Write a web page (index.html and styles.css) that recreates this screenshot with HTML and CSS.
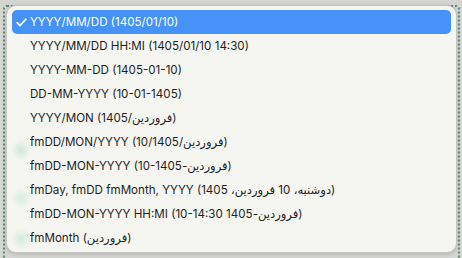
FILE: index.html
```html
<!DOCTYPE html>
<html lang="fa">

<head>
    <meta charset="UTF-8">
    <title>Date format</title>
    <link rel="stylesheet" href="styles.css">
</head>

<body>
    <div class="field">
        <!-- the open popup of the date format select -->
        <ul class="menu" dir="ltr">
            <li class="item selected">
                <svg class="check" width="11" height="9" viewBox="0 0 11 9">
                    <polyline points="1.2,4.6 4,7.6 9.8,1.2" fill="none" stroke="#fff" stroke-width="1.7"
                        stroke-linecap="round" stroke-linejoin="round" />
                </svg>YYYY/MM/DD (1405/01/10)
            </li>
            <li class="item">YYYY/MM/DD HH:MI (1405/01/10 14:30)</li>
            <li class="item">YYYY-MM-DD (1405-01-10)</li>
            <li class="item">DD-MM-YYYY (10-01-1405)</li>
            <li class="item">YYYY/MON (1405/فروردین)</li>
            <li class="item">fmDD/MON/YYYY (10/فروردین/1405)</li>
            <li class="item">fmDD-MON-YYYY (10-فروردین-1405)</li>
            <li class="item">fmDay, fmDD fmMonth, YYYY (دوشنبه، 10 فروردین، 1405)</li>
            <li class="item">fmDD-MON-YYYY HH:MI (10-فروردین-1405 14:30)</li>
            <li class="item">fmMonth (فروردین)</li>
        </ul>
    </div>
</body>

</html>
```

FILE: styles.css
```css
html,
body {
    margin: 0;
    height: 100%;
}

body {
    background-color: #d5d6d3;
    font-family: Inter, "DejaVu Sans", sans-serif;
    overflow: hidden;
}

/* the select behind the popup, only its dotted focus edge shows */
.field {
    margin: 5px 2px 0 3px;
    height: 260px;
    border-left: 2px dotted #5d8a66;
    border-top: 2px dotted #5d8a66;
    border-right: 2px dotted #5d8a66;
    border-radius: 4px 4px 0 0;
}

.menu {
    list-style: none;
    margin: -2px 0 0 1px;
    padding: 4px 5px 2px;
    width: 439px;
    height: 240px;
    background-color: #f5f6f1;
    background-image:
        radial-gradient(10px 11px at 14px 144px, rgba(160, 215, 180, 0.45), transparent),
        radial-gradient(10px 10px at 14px 192px, rgba(160, 215, 180, 0.35), transparent),
        radial-gradient(10px 11px at 14px 233px, rgba(160, 215, 180, 0.4), transparent);
    border: 1px solid #c4c5c1;
    border-radius: 10px;
    box-shadow: 0 1px 4px rgba(0, 0, 0, 0.18);
}

.item {
    position: relative;
    height: 24px;
    line-height: 24px;
    padding-left: 18px;
    font-size: 11.6px;
    color: #1e1e1e;
    white-space: nowrap;
}

.selected {
    background-color: #4592f8;
    color: #fff;
    border-radius: 5px;
}

.check {
    position: absolute;
    left: 4px;
    top: 8px;
}
```
